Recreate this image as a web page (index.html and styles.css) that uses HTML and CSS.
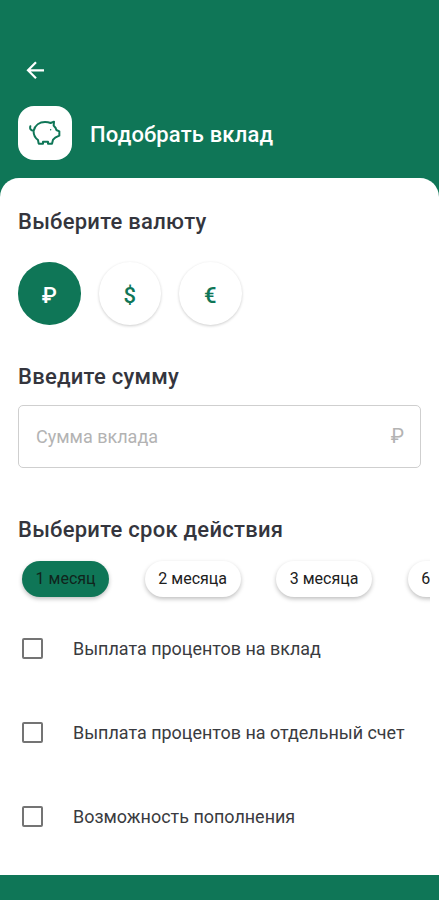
FILE: index.html
```html
<!DOCTYPE html>
<html lang="ru">
<head>
<meta charset="utf-8">
<title>Подобрать вклад</title>
<link rel="stylesheet" href="styles.css">
</head>
<body>
<header class="header">
  <svg class="back" viewBox="0 0 20 20"><path d="M18 10.3H2.5M10 2.3 2 10.3l8 8"/></svg>
  <div class="title-row">
    <div class="tile">
      <svg class="pig" viewBox="0 0 96 78"><path d="M4 19C2 26 5 32 14 32C18 15 32 6 48 6C55 6 60 7 65 9L75 5L74 17L80 24L82 30L91 34V47L80 52L72 59L69 71H57V65H42V71H29L27 60C18 53 13 43 14 32"/><circle cx="65" cy="29" r="2.2"/></svg>
    </div>
    <h1 class="title">Подобрать вклад</h1>
  </div>
</header>
<main class="sheet">
  <h2 class="heading currency-heading">Выберите валюту</h2>
  <div class="currencies">
    <button class="currency selected">₽</button>
    <button class="currency">$</button>
    <button class="currency">€</button>
  </div>
  <h2 class="heading sum-heading">Введите сумму</h2>
  <div class="field"><span class="placeholder">Сумма вклада</span><span class="unit">₽</span></div>
  <h2 class="heading term-heading">Выберите срок действия</h2>
  <div class="terms">
    <button class="chip active">1 месяц</button>
    <button class="chip">2 месяца</button>
    <button class="chip">3 месяца</button>
    <button class="chip">6 месяцев</button>
  </div>
  <div class="options">
    <label class="option"><span class="box"></span><span class="label">Выплата процентов на вклад</span></label>
    <label class="option"><span class="box"></span><span class="label">Выплата процентов на отдельный счет</span></label>
    <label class="option"><span class="box"></span><span class="label">Возможность пополнения</span></label>
  </div>
</main>
</body>
</html>
```
FILE: styles.css
```css
* { box-sizing: border-box; }
body {
  margin: 0;
  height: 900px;
  overflow: hidden;
  background: #0f7657;
  font-family: Roboto, "Liberation Sans", sans-serif;
}
h1, h2 { margin: 0; font-weight: 500; white-space: nowrap; }
button { border: 0; padding: 0; font-family: inherit; }
.header { height: 178px; padding: 60px 18px 0; }
.back {
  display: block;
  width: 20px;
  height: 20px;
  margin-left: 8px;
  fill: none;
  stroke: #fff;
  stroke-width: 2.2;
}
.title-row { display: flex; align-items: center; gap: 18px; margin-top: 26px; }
.tile {
  display: flex;
  align-items: center;
  justify-content: center;
  width: 54px;
  height: 54px;
  border-radius: 16px;
  background: #fff;
}
.pig {
  width: 32px;
  height: 26px;
  fill: none;
  stroke: #0f7657;
  stroke-width: 6;
  stroke-linejoin: round;
  stroke-linecap: round;
}
.pig circle { fill: #0f7657; stroke: none; }
.title { padding-top: 3px; color: #fff; font-size: 22px; line-height: 28px; letter-spacing: .15px; }
.sheet {
  height: 697px;
  padding: 29px 18px 0;
  border-radius: 19px 19px 0 0;
  background: #fff;
  overflow: hidden;
}
.heading { height: 28px; color: #34353d; font-size: 22px; line-height: 29px; letter-spacing: .25px; }
.currencies { display: flex; gap: 18px; margin-top: 27px; }
.currency {
  width: 62.5px;
  height: 62.5px;
  padding-top: 5px;
  border-radius: 50%;
  background: #fff;
  color: #0f7657;
  font-size: 22px;
  font-weight: 500;
  box-shadow: 0 1px 3px rgba(0, 0, 0, .2);
}
.currency.selected { background: #0f7657; color: #fff; box-shadow: none; }
.sum-heading { margin-top: 37.5px; }
.field {
  display: flex;
  align-items: center;
  justify-content: space-between;
  width: 403px;
  height: 63px;
  margin-top: 15px;
  padding: 0 16px 0 17px;
  border: 1px solid #cfcfcf;
  border-radius: 5px;
  color: #b3b3b3;
  font-size: 18px;
}
.unit { font-size: 20px; padding-bottom: 2px; }
.term-heading { margin-top: 47px; }
.terms {
  display: flex;
  gap: 35.6px;
  width: 412px;
  height: 56px;
  margin-top: 8px;
  padding: 10px 4px;
  overflow: hidden;
}
.chip {
  flex: none;
  height: 36px;
  padding: 0 13.6px 1px;
  border-radius: 18px;
  background: #fff;
  color: #202020;
  font-size: 16px;
  box-shadow: 0 2px 4px rgba(0, 0, 0, .25);
}
.chip.active { background: #0f7657; color: #10241c; }
.options { display: grid; grid-auto-rows: 84px; }
.option { display: flex; align-items: center; gap: 30px; padding: 0 0 1px 4px; }
.box { width: 21px; height: 21px; border: 2px solid #747474; border-radius: 2px; }
.label { padding-top: 1px; color: #3a3b40; font-size: 17.95px; line-height: 24px; white-space: nowrap; }
```
